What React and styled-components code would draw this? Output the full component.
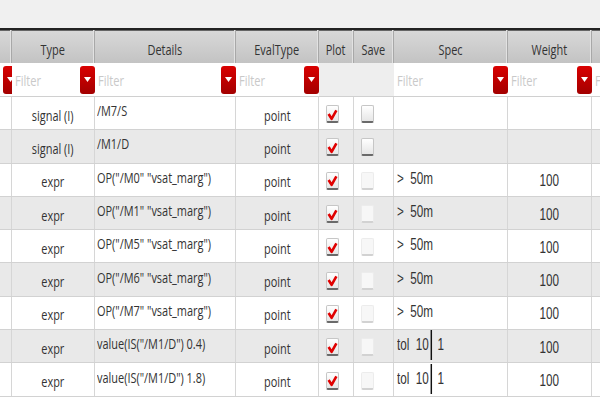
import React from 'react';
import styled, { createGlobalStyle } from 'styled-components';

const COLS = '12px 83px 141px 83px 35px 40px 114px 84px 1fr';

const rows = [
  { type: 'signal (I)', details: '/M7/S', plot: true, save: 'on' },
  { type: 'signal (I)', details: '/M1/D', plot: true, save: 'on' },
  { type: 'expr', details: 'OP("/M0" "vsat_marg")', plot: true, save: 'off', spec: '>  50m', weight: '100' },
  { type: 'expr', details: 'OP("/M1" "vsat_marg")', plot: true, save: 'off', spec: '>  50m', weight: '100' },
  { type: 'expr', details: 'OP("/M5" "vsat_marg")', plot: true, save: 'off', spec: '>  50m', weight: '100' },
  { type: 'expr', details: 'OP("/M6" "vsat_marg")', plot: true, save: 'off', spec: '>  50m', weight: '100' },
  { type: 'expr', details: 'OP("/M7" "vsat_marg")', plot: true, save: 'off', spec: '>  50m', weight: '100' },
  { type: 'expr', details: 'value(IS("/M1/D") 0.4)', plot: true, save: 'off', tol: true, weight: '100' },
  { type: 'expr', details: 'value(IS("/M1/D") 1.8)', plot: true, save: 'off', tol: true, weight: '100' },
];

const GlobalStyle = createGlobalStyle`
  body {
    margin: 0;
    background: #ffffff;
    font-family: 'Open Sans', sans-serif;
    color: #333333;
  }
`;

const Page = styled.div`
  width: 600px;
  height: 420px;
  overflow: hidden;
`;

const TopBar = styled.div`
  height: 28px;
  background: #f0f0f0;
`;

const Table = styled.div`
  width: 622px;
`;

const HeaderRow = styled.div`
  display: grid;
  grid-template-columns: ${COLS};
  height: 35px;
  border-top: 2px solid #222222;
  box-shadow: inset 0 1px 0 #666666;
  background: linear-gradient(#d9d9d9, #c3c3c3);
  box-sizing: border-box;
`;

const HeadCell = styled.div`
  display: flex;
  align-items: center;
  justify-content: center;
  padding-top: 5px;
  box-sizing: border-box;
  border-right: 1px solid #a8a8a8;
  box-shadow: inset -1px 0 0 #e2e2e2;
  font-size: 15px;
  color: #333333;
`;

const FilterRow = styled.div`
  display: grid;
  grid-template-columns: ${COLS};
  height: 34px;
  border-bottom: 1px solid #d0d0d0;
  box-sizing: border-box;
`;

const FilterCell = styled.div`
  display: flex;
  align-items: center;
  padding-left: ${(p) => (p.$empty ? 0 : 3)}px;
  background: ${(p) => (p.$empty ? '#eeeeee' : '#ffffff')};
  overflow: hidden;
  box-sizing: border-box;
`;

const Placeholder = styled.span`
  flex: 1;
  font-size: 15px;
  color: #c9c9c9;
  white-space: nowrap;
  display: inline-block;
  transform: scaleX(0.74);
  transform-origin: left center;
`;

const DropButton = styled.span`
  flex: none;
  width: 15px;
  height: 28px;
  margin-left: auto;
  border-radius: 3px;
  background: linear-gradient(#d90000, #a30000);
  display: flex;
  align-items: center;
  justify-content: center;
`;

const Row = styled.div`
  display: grid;
  grid-template-columns: ${COLS};
  height: 33.3px;
  background: ${(p) => (p.$alt ? '#e9e9e9' : '#ffffff')};
  border-bottom: 1px solid #d2d2d2;
  box-sizing: border-box;
`;

const Cell = styled.div`
  display: flex;
  align-items: center;
  justify-content: ${(p) => (p.$center ? 'center' : 'flex-start')};
  padding: ${(p) => p.$pad || '0'};
  border-right: 1px solid #d6d6d6;
  box-sizing: border-box;
  overflow: hidden;
  font-size: 15px;
`;

const Txt = styled.span`
  display: inline-block;
  white-space: pre;
  font-family: ${(p) => (p.$arial ? "'Liberation Sans', Arial, sans-serif" : "'Open Sans', sans-serif")};
  font-size: ${(p) => (p.$arial ? 16 : 15)}px;
  transform: scaleX(0.73);
  transform-origin: ${(p) => (p.$center ? 'center' : 'left')} center;
`;

const TolGroup = styled.span`
  display: inline-flex;
  align-items: center;
  transform: scaleX(0.73);
  transform-origin: left center;
  font-family: 'Liberation Sans', Arial, sans-serif;
  font-size: 16px;
  white-space: pre;
`;

const Cursor = styled.span`
  width: 2.8px;
  height: 30px;
  margin: 0 7px 0 2px;
  background: #111111;
`;

const Box = styled.span`
  width: 13px;
  height: 18px;
  box-sizing: border-box;
  border-radius: 2px;
  border: 1px solid ${(p) => (p.$off ? '#ececec' : '#c6c6c6')};
  border-bottom: 2px solid ${(p) => (p.$off ? '#d2d2d2' : '#6a6a6a')};
  background: ${(p) => (p.$off ? '#f7f7f7' : 'linear-gradient(#ffffff, #e6e6e6)')};
  display: flex;
  align-items: center;
  justify-content: center;
`;

const Check = ({ checked, off }) => (
  <Box $off={off}>
    {checked && (
      <svg width="11" height="16" viewBox="0 0 11 16">
        <path d="M1.6 8 L4.6 12.8 L9.4 4.4" fill="none" stroke="#e00000" strokeWidth="2.6" strokeLinejoin="round" />
      </svg>
    )}
  </Box>
);

const Arrow = () => (
  <DropButton>
    <svg width="7" height="5" viewBox="0 0 7 5">
      <path d="M0 0 H7 L3.5 5 Z" fill="#ffffff" />
    </svg>
  </DropButton>
);

const headers = ['', 'Type', 'Details', 'EvalType', 'Plot', 'Save', 'Spec', 'Weight', ''];
const filters = [true, true, true, true, false, false, true, true, true];

export default function App() {
  return (
    <Page>
      <GlobalStyle />
      <TopBar />
      <Table>
        <HeaderRow>
          {headers.map((h, i) => (
            <HeadCell key={i}>
              <Txt $center>{h}</Txt>
            </HeadCell>
          ))}
        </HeaderRow>
        <FilterRow>
          {filters.map((f, i) =>
            f ? (
              <FilterCell key={i}>
                {i > 0 && <Placeholder>Filter</Placeholder>}
                {i < 8 && <Arrow />}
              </FilterCell>
            ) : (
              <FilterCell key={i} $empty />
            )
          )}
        </FilterRow>
        {rows.map((r, i) => (
          <Row key={i} $alt={i % 2 === 1}>
            <Cell />
            <Cell $center $pad="3px 0 0 0">
              <Txt $center>{r.type}</Txt>
            </Cell>
            <Cell $pad="0 0 6px 2px">
              <Txt>{r.details}</Txt>
            </Cell>
            <Cell $center $pad="3px 0 0 0">
              <Txt $center>point</Txt>
            </Cell>
            <Cell $pad="2px 0 0 7px">
              <Check checked={r.plot} />
            </Cell>
            <Cell $pad="2px 0 0 7px">
              <Check off={r.save === 'off'} />
            </Cell>
            <Cell $pad="0 0 2px 3px">
              {r.spec && <Txt $arial>{r.spec}</Txt>}
              {r.tol && (
                <TolGroup>
                  {'tol  10'}
                  <Cursor />
                  {'1'}
                </TolGroup>
              )}
            </Cell>
            <Cell $center $pad="3px 0 0 0">
              {r.weight && <Txt $arial $center>{r.weight}</Txt>}
            </Cell>
            <Cell />
          </Row>
        ))}
      </Table>
    </Page>
  );
}
